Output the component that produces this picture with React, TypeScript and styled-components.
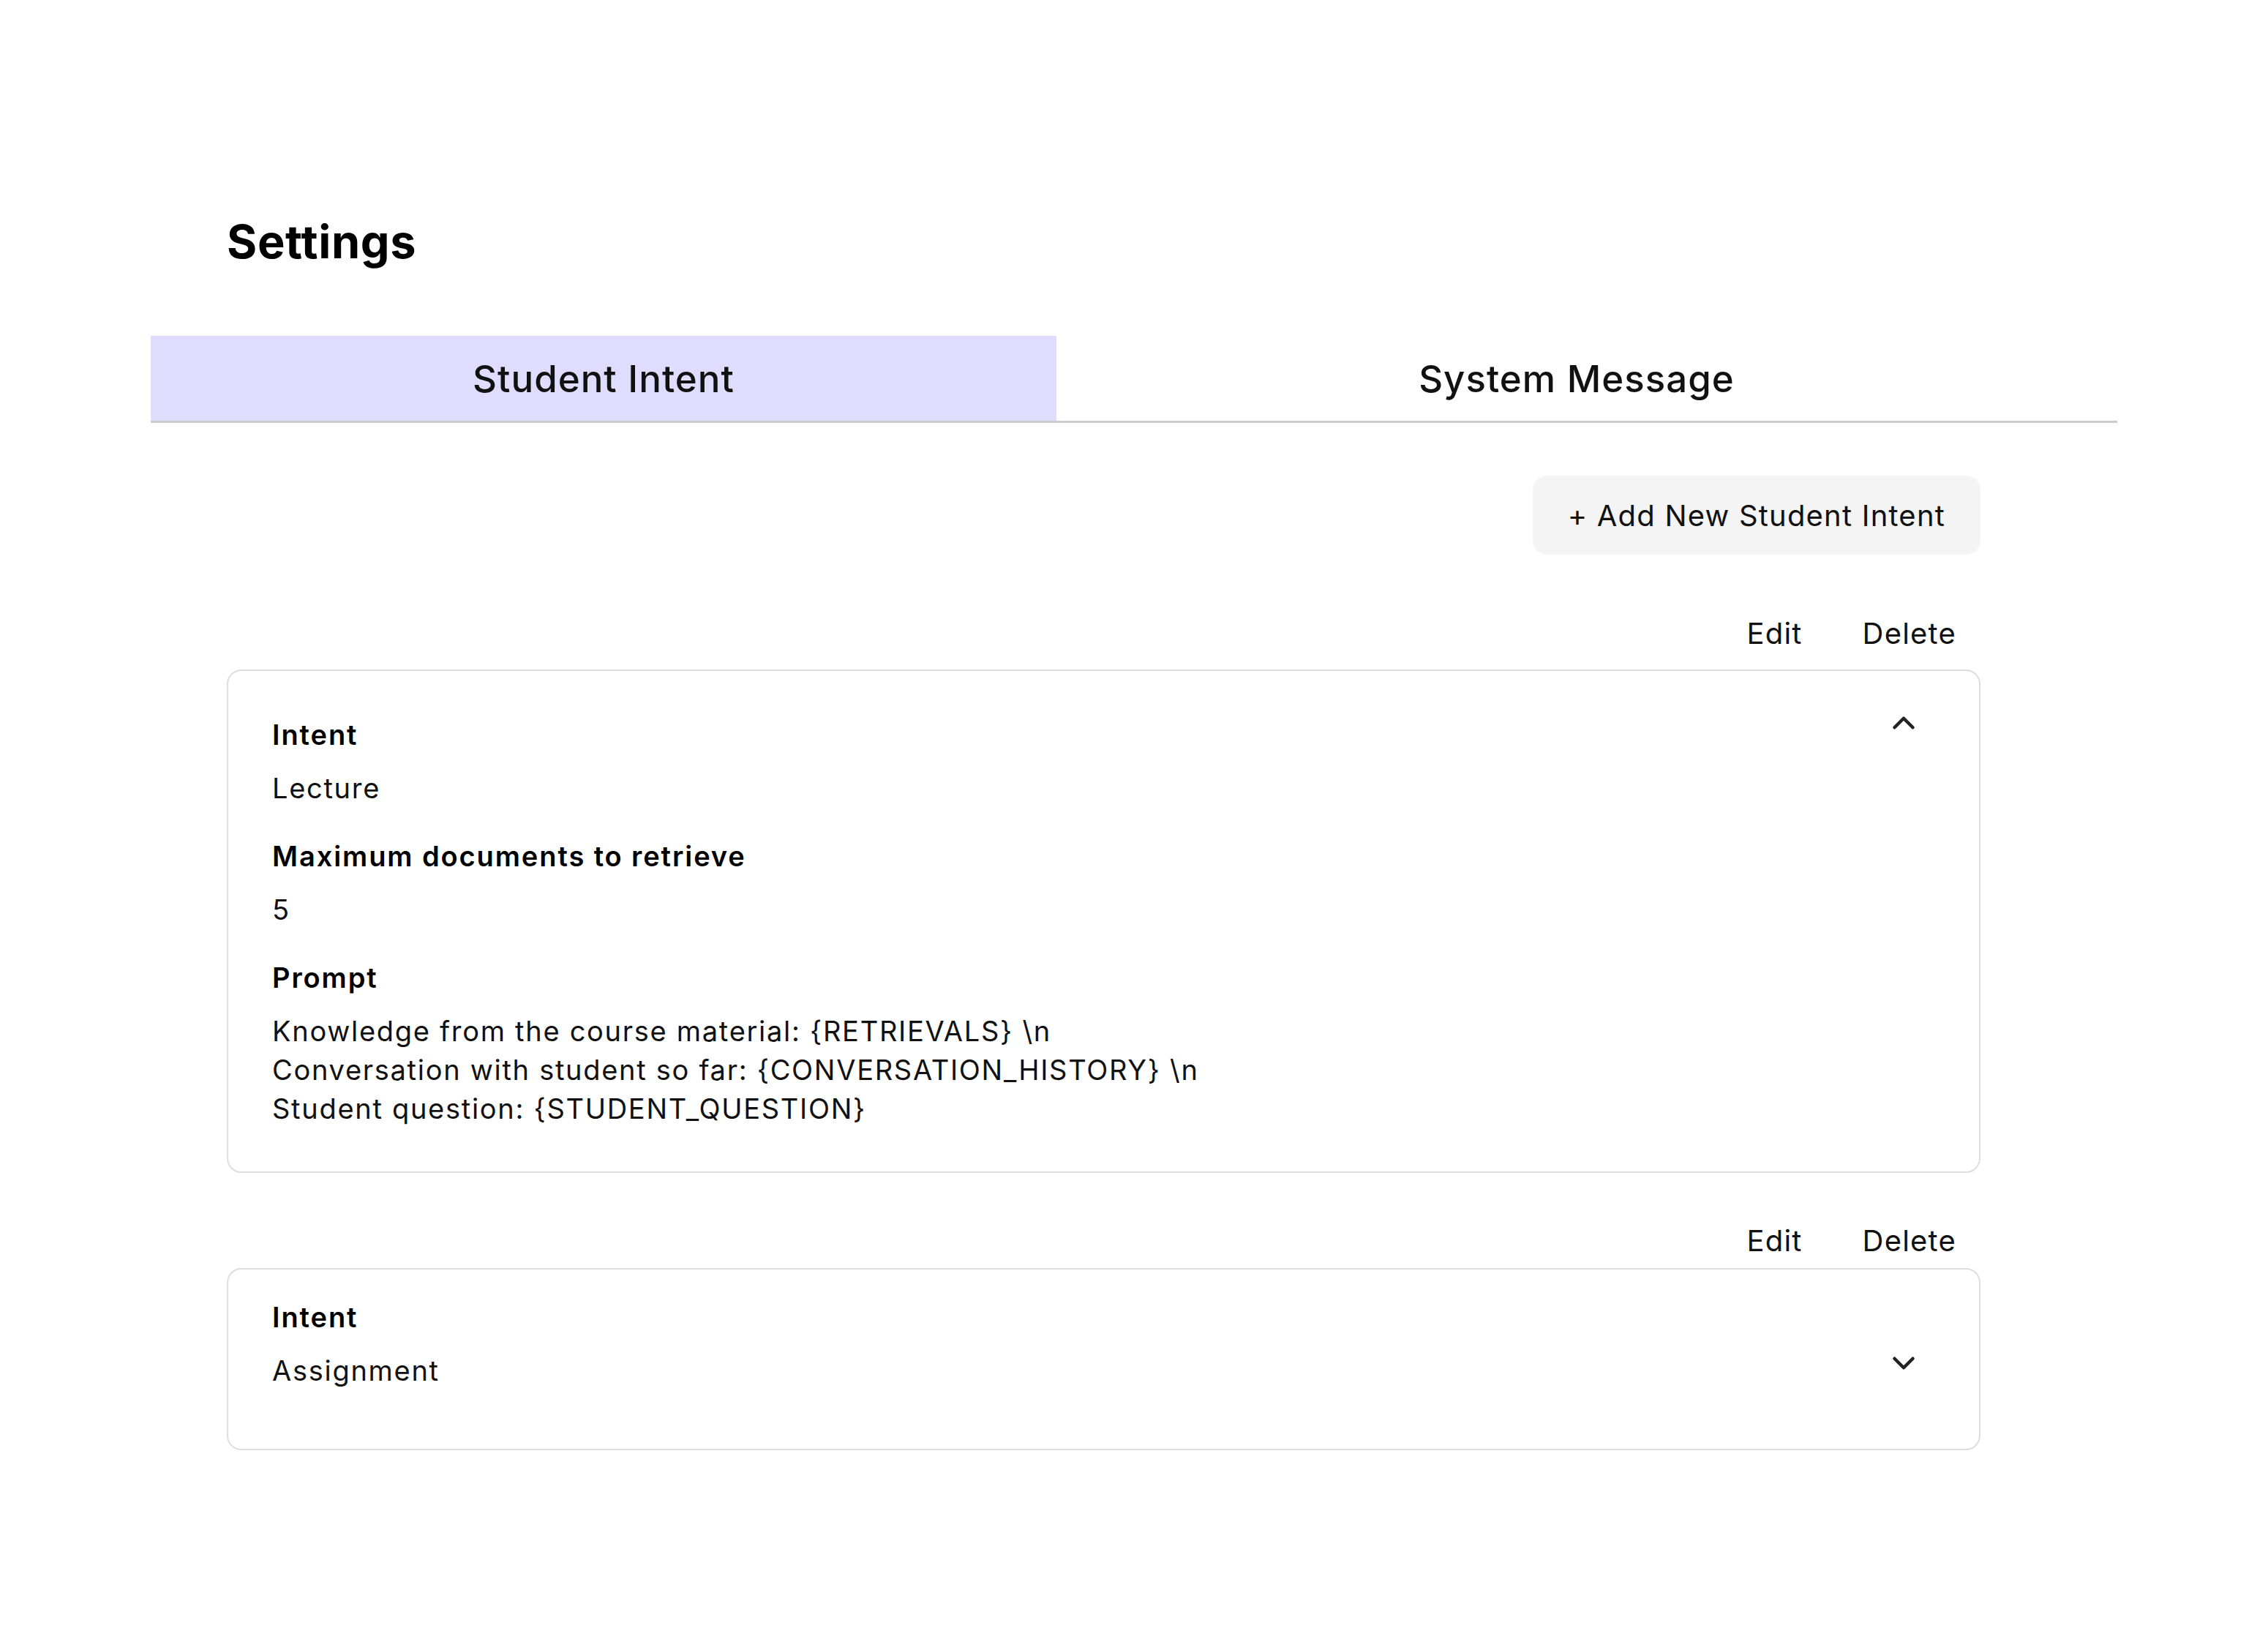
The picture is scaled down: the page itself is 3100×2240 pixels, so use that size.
import React from 'react';
import styled, { createGlobalStyle } from 'styled-components';
import { ChevronDown, ChevronUp } from 'lucide-react';

const GlobalStyle = createGlobalStyle`
  html, body {
    margin: 0;
    padding: 0;
    background: #ffffff;
  }
  body {
    font-family: Inter, "Noto Sans", "Liberation Sans", sans-serif;
    color: #111111;
  }
`;

const Page = styled.div`
  width: 3100px;
  min-height: 2240px;
  box-sizing: border-box;
  padding: 292px 206px 0;
`;

const Section = styled.div`
  width: 2397px;
  margin-left: 104px;
`;

const Title = styled.h1`
  margin: 0;
  font-size: 63px;
  line-height: 76px;
  font-weight: 700;
  letter-spacing: 0.01em;
  color: #000;
`;

const TabBar = styled.div`
  display: grid;
  grid-template-columns: 1238px 1422px 1fr;
  margin-top: 91px;
  border-bottom: 3px solid #cccccc;
`;

const Tab = styled.button<{ $active?: boolean }>`
  height: 116px;
  border: none;
  margin: 0;
  padding: 0;
  background: ${(p) => (p.$active ? '#dfdcfd' : 'transparent')};
  font-family: inherit;
  font-size: 51px;
  font-weight: 500;
  letter-spacing: 0.02em;
  color: #111;
  display: flex;
  align-items: center;
  justify-content: center;
  cursor: pointer;
`;

const Toolbar = styled.div`
  display: flex;
  justify-content: flex-end;
  margin-top: 72px;
`;

const AddButton = styled.button`
  height: 108px;
  padding: 0 48px;
  border: none;
  border-radius: 20px;
  background: #f4f4f4;
  font-family: inherit;
  font-size: 40px;
  letter-spacing: 0.03em;
  color: #111;
  cursor: pointer;
`;

const IntentBlock = styled.div<{ $top: number }>`
  margin-top: ${(p) => p.$top}px;
`;

const ActionRow = styled.div<{ $gap: number }>`
  display: flex;
  justify-content: flex-end;
  gap: 82px;
  padding-right: 33px;
  margin-bottom: ${(p) => p.$gap}px;
`;

const ActionButton = styled.button`
  border: none;
  background: none;
  padding: 0;
  font-family: inherit;
  font-size: 40px;
  line-height: 48px;
  letter-spacing: 0.03em;
  color: #111;
  cursor: pointer;
`;

const Card = styled.div<{ $open?: boolean }>`
  display: flex;
  align-items: ${(p) => (p.$open ? 'flex-start' : 'center')};
  border: 2px solid #dedede;
  border-radius: 20px;
  background: #fff;
`;

const CardBody = styled.div<{ $open?: boolean }>`
  flex: 1;
  padding: ${(p) => (p.$open ? '61px 60px 59px' : '39px 60px 80px')};
  display: flex;
  flex-direction: column;
  gap: 40px;
`;

const Field = styled.div`
  display: flex;
  flex-direction: column;
  gap: 20px;
`;

const Label = styled.div`
  font-size: 38px;
  line-height: 53px;
  font-weight: 600;
  letter-spacing: 0.05em;
  color: #000;
`;

const Value = styled.div`
  font-size: 38px;
  line-height: 53px;
  letter-spacing: 0.045em;
  color: #111;
  white-space: pre-line;
`;

const Toggle = styled.div<{ $open?: boolean }>`
  display: flex;
  padding-right: 78px;
  margin-top: ${(p) => (p.$open ? '46px' : '10px')};
  color: #222;
`;

const intents = [
  {
    name: 'Lecture',
    open: true,
    top: 84,
    gap: 25,
    docs: '5',
    prompt:
      'Knowledge from the course material: {RETRIEVALS} \\n\nConversation with student so far: {CONVERSATION_HISTORY} \\n\nStudent question: {STUDENT_QUESTION}',
  },
  { name: 'Assignment', open: false, top: 69, gap: 13, docs: '', prompt: '' },
];

export default function App() {
  return (
    <Page>
      <GlobalStyle />
      <Section>
        <Title>Settings</Title>
      </Section>
      <TabBar>
        <Tab $active>Student Intent</Tab>
        <Tab>System Message</Tab>
      </TabBar>
      <Section>
        <Toolbar>
          <AddButton>+ Add New Student Intent</AddButton>
        </Toolbar>
        {intents.map((it) => (
          <IntentBlock key={it.name} $top={it.top}>
            <ActionRow $gap={it.gap}>
              <ActionButton>Edit</ActionButton>
              <ActionButton>Delete</ActionButton>
            </ActionRow>
            <Card $open={it.open}>
              <CardBody $open={it.open}>
                <Field>
                  <Label>Intent</Label>
                  <Value>{it.name}</Value>
                </Field>
                {it.open && (
                  <>
                    <Field>
                      <Label>Maximum documents to retrieve</Label>
                      <Value>{it.docs}</Value>
                    </Field>
                    <Field>
                      <Label>Prompt</Label>
                      <Value>{it.prompt}</Value>
                    </Field>
                  </>
                )}
              </CardBody>
              <Toggle $open={it.open}>
                {it.open ? (
                  <ChevronUp size={50} strokeWidth={2.2} />
                ) : (
                  <ChevronDown size={50} strokeWidth={2.2} />
                )}
              </Toggle>
            </Card>
          </IntentBlock>
        ))}
      </Section>
    </Page>
  );
}
